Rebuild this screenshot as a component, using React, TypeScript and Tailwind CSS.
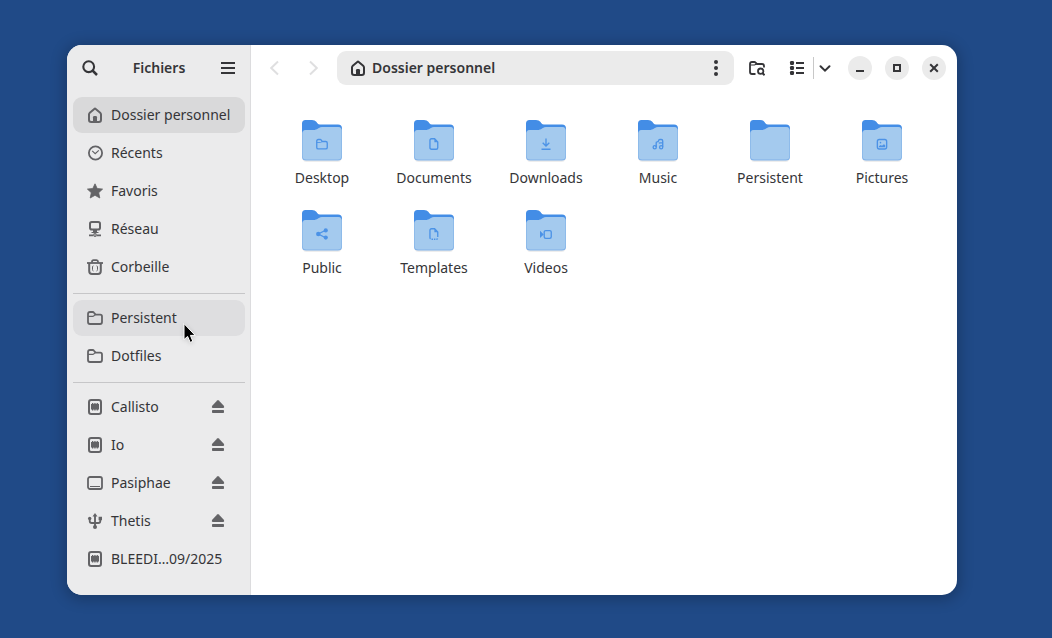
import * as React from "react";
import clsx from "clsx";

function Icon(props: { className?: string; children: React.ReactNode }) {
  return (
    <svg
      viewBox="0 0 16 16"
      fill="none"
      stroke="currentColor"
      strokeWidth="2"
      aria-hidden="true"
      className={clsx("size-4 shrink-0", props.className)}
    >
      {props.children}
    </svg>
  );
}

function SearchIcon() {
  return (
    <Icon>
      <circle cx="6.7" cy="6.7" r="5.4" strokeWidth="2.1" />
      <path d="M10.5 10.5L15 15" strokeWidth="2.5" />
    </Icon>
  );
}

function MenuIcon() {
  return (
    <Icon>
      <path d="M1 3H15M1 8H15M1 13H15" />
    </Icon>
  );
}

function HomeIcon() {
  return (
    <Icon>
      <path
        d="M2 7.5V12.8Q2 15 4.2 15H11.8Q14 15 14 12.8V7.5Q14 6.4 13.2 5.7L8.7 1.9Q8 1.3 7.3 1.9L2.8 5.7Q2 6.4 2 7.5Z"
        strokeLinejoin="round"
      />
      <path d="M6 15V10.3Q6 9 7.3 9H8.7Q10 9 10 10.3V15Z" fill="currentColor" stroke="none" />
    </Icon>
  );
}

function ClockIcon() {
  return (
    <Icon>
      <circle cx="8.5" cy="8" r="6.6" strokeWidth="1.8" />
      <path d="M5.2 5.9L8.2 8.7L11.8 5.4" strokeWidth="1.2" />
    </Icon>
  );
}

function StarIcon() {
  return (
    <Icon>
      <path
        d="M8 0.8L10.2 5.5L15.6 6.1L11.7 9.7L12.8 15L8 12.3L3.2 15L4.3 9.7L0.4 6.1L5.8 5.5Z"
        fill="currentColor"
        stroke="currentColor"
        strokeWidth="0.8"
        strokeLinejoin="round"
      />
    </Icon>
  );
}

function NetworkIcon() {
  return (
    <Icon>
      <rect x="3" y="1" width="10" height="7.5" rx="1.8" />
      <path d="M6 9H10V11H11.5V12H4.5V11H6Z" fill="currentColor" stroke="none" />
      <path d="M2 14.4H6M10 14.4H14" strokeWidth="1.6" />
      <circle cx="8" cy="14" r="1.3" strokeWidth="1.2" />
    </Icon>
  );
}

function TrashIcon() {
  return (
    <Icon>
      <path d="M0 4H16" strokeWidth="1.8" />
      <path d="M5 3.5V2.8Q5 1.2 6.5 1.2H9.5Q11 1.2 11 2.8V3.5" strokeWidth="1.8" />
      <path d="M2.2 4V12Q2.2 15 5 15H11Q13.8 15 13.8 12V4" />
      <path
        d="M6.4 6.8Q5.5 7 5.5 8V10.5Q5.5 11.7 6.4 12M9.6 6.8Q10.5 7 10.5 8V10.5Q10.5 11.7 9.6 12"
        strokeWidth="1"
      />
    </Icon>
  );
}

function FolderIcon() {
  return (
    <Icon>
      <path
        d="M1 5.5V12Q1 14 3 14H13Q15 14 15 12V6.5Q15 4.7 13.2 4.7H8.6L7 2.8Q6.5 2 5.6 2H3Q1 2 1 4Z"
        strokeWidth="1.8"
      />
      <path d="M1 6.3H5.8Q6.4 6.3 6.9 5.8L8.2 4.6" strokeWidth="1.2" />
    </Icon>
  );
}

function MediaIcon() {
  return (
    <Icon>
      <rect x="2" y="1" width="12" height="14" rx="2.2" />
      <path
        d="M4 5H5V4H6V5H6.7V4H7.7V5H8.4V4H9.4V5H10.1V4H11.1V5H12V10.5H11.1V11.5H10.1V10.5H9.4V11.5H8.4V10.5H7.7V11.5H6.7V10.5H6V11.5H5V10.5H4Z"
        fill="currentColor"
        stroke="none"
      />
    </Icon>
  );
}

function DiskIcon() {
  return (
    <Icon>
      <rect x="1" y="2" width="14" height="12" rx="2" strokeWidth="1.8" />
      <path d="M3 11.5H13" strokeWidth="1" />
    </Icon>
  );
}

function UsbIcon() {
  return (
    <Icon>
      <path d="M8 2V14" strokeWidth="1.9" />
      <path d="M2.7 5V8Q2.7 10 4.7 10H11.3Q13.3 10 13.3 8V5" strokeWidth="1.8" />
      <path d="M5.5 3.4L8 0L10.5 3.4Z" fill="currentColor" stroke="none" />
      <circle cx="2.7" cy="5.4" r="1.7" fill="currentColor" stroke="none" />
      <path d="M11.6 3.8H15V7.2H11.6Z" fill="currentColor" stroke="none" />
      <circle cx="8" cy="14" r="2" fill="currentColor" stroke="none" />
    </Icon>
  );
}

function EjectIcon() {
  return (
    <Icon>
      <path
        d="M7.2 1.4Q8 0.7 8.8 1.4L13.8 6.8Q14.8 9 13 9H3Q1.2 9 2.2 6.8Z"
        fill="currentColor"
        stroke="none"
      />
      <rect x="2" y="11" width="12" height="3" rx="0.8" fill="currentColor" stroke="none" />
    </Icon>
  );
}

function FolderSearchIcon() {
  return (
    <Icon>
      <path
        d="M6.5 14H3Q1 14 1 12V4Q1 2 3 2H5.3Q6.1 2 6.6 2.7L7.9 4H13Q15 4 15 6V7.5"
        strokeWidth="1.8"
      />
      <path d="M1.5 5H5.5L7.5 4" strokeWidth="1.2" />
      <circle cx="11.7" cy="11.2" r="2.7" strokeWidth="1.8" />
      <path d="M13.4 13L15.6 15.2" />
    </Icon>
  );
}

function ListIcon() {
  return (
    <Icon>
      <rect x="1" y="1" width="4" height="4" rx="1.2" fill="currentColor" stroke="none" />
      <rect x="1" y="6" width="4" height="4" rx="1.2" fill="currentColor" stroke="none" />
      <rect x="1" y="11" width="4" height="4" rx="1.2" fill="currentColor" stroke="none" />
      <path d="M7 3H15M7 8H15M7 13H15" />
    </Icon>
  );
}

type Place = {
  name: string;
  icon: React.ComponentType;
  state?: "active" | "hover";
  ejectable?: boolean;
};

const places: Place[] = [
  { name: "Dossier personnel", icon: HomeIcon, state: "active" },
  { name: "Récents", icon: ClockIcon },
  { name: "Favoris", icon: StarIcon },
  { name: "Réseau", icon: NetworkIcon },
  { name: "Corbeille", icon: TrashIcon },
];

const bookmarks: Place[] = [
  { name: "Persistent", icon: FolderIcon, state: "hover" },
  { name: "Dotfiles", icon: FolderIcon },
];

const volumes: Place[] = [
  { name: "Callisto", icon: MediaIcon, ejectable: true },
  { name: "Io", icon: MediaIcon, ejectable: true },
  { name: "Pasiphae", icon: DiskIcon, ejectable: true },
  { name: "Thetis", icon: UsbIcon, ejectable: true },
  { name: "BLEEDI…09/2025", icon: MediaIcon },
];

function PlaceList(props: { items: Place[] }) {
  return (
    <ul className="flex flex-col gap-0.5">
      {props.items.map((item) => (
        <li
          key={item.name}
          className={clsx(
            "relative flex h-9 items-center rounded-[9px]",
            item.state === "active" && "bg-[#d9d9da]",
            item.state === "hover" && "bg-[#dedee0]"
          )}
        >
          <a
            href="#"
            className="flex h-full min-w-0 flex-1 items-center gap-2 pl-3.5 whitespace-nowrap"
          >
            <span className="text-[#636366]">
              <item.icon />
            </span>
            {item.name}
          </a>
          {item.ejectable && (
            <button
              type="button"
              aria-label={`Éjecter ${item.name}`}
              className="mr-2.5 grid size-[34px] place-items-center text-[#636366]"
            >
              <EjectIcon />
            </button>
          )}
          {item.state === "hover" && <Pointer />}
        </li>
      ))}
    </ul>
  );
}

function Pointer() {
  return (
    <svg
      viewBox="0 0 14 22"
      className="pointer-events-none absolute top-[23px] left-[110px] h-[22px] w-3.5 drop-shadow-sm"
      aria-hidden="true"
    >
      <path
        d="M1 0.6V16.6L4.6 13.4L7.2 19.4L9.8 18.3L7.4 12.4H12.2Z"
        fill="#000"
        stroke="#fff"
        strokeWidth="1"
      />
    </svg>
  );
}

const emblems: Record<string, React.ReactNode> = {
  Desktop: (
    <>
      <path d="M1 5V12.5Q1 14.5 3 14.5H13Q15 14.5 15 12.5V6.5Q15 4.7 13 4.7H8.4L7 2.7Q6.5 2 5.6 2H3Q1 2 1 4Z" />
      <path d="M1 6H6L8.4 4.7" strokeWidth="1.2" />
    </>
  ),
  Documents: (
    <>
      <path d="M4.6 1H8.8L13 5.4V13Q13 15 11 15H4.6Q2.6 15 2.6 13V3Q2.6 1 4.6 1Z" />
      <path d="M8.5 1V5.8H13Z" fill="currentColor" stroke="none" />
    </>
  ),
  Downloads: <path d="M8 0.5V10.5M3.6 6.4L8 10.8L12.4 6.4M2 15H14" />,
  Music: (
    <>
      <path d="M5.6 12V6.2Q5.6 5.2 6.8 5.2Q8.6 5 8.8 3.6Q9 2 10.4 2H12.3Q14.3 2 14.3 4V12M9 6.8Q10 6.4 11.5 6.4H14.3" />
      <circle cx="3.6" cy="12.3" r="2.1" />
      <circle cx="12.2" cy="12.3" r="2.1" />
    </>
  ),
  Pictures: (
    <>
      <rect x="1.8" y="2" width="12.4" height="12.6" rx="2.5" />
      <path
        d="M3.8 12.4V11L6.2 9.4L8 10.4L10.6 8.2L12.3 9.8V12.4Z"
        fill="currentColor"
        stroke="none"
      />
      <circle cx="6" cy="6.2" r="1.1" fill="currentColor" stroke="none" />
    </>
  ),
  Public: (
    <>
      <path d="M12.8 3L3 8L12.8 13" />
      <circle cx="13" cy="3.2" r="2.8" fill="currentColor" stroke="none" />
      <circle cx="3" cy="8" r="2.9" fill="currentColor" stroke="none" />
      <circle cx="13" cy="12.8" r="2.8" fill="currentColor" stroke="none" />
    </>
  ),
  Templates: (
    <>
      <path d="M13 12V5.4L8.8 1H4.6Q2.6 1 2.6 3V13" />
      <path d="M2.6 12.6Q2.6 15 4.6 15H11Q13 15 13 12.6" strokeDasharray="2 1.2" />
      <path d="M8.5 1V5.8H13Z" fill="currentColor" stroke="none" />
    </>
  ),
  Videos: (
    <>
      <rect x="5.6" y="3.4" width="9.4" height="10.4" rx="2" />
      <path d="M0 3.8L5 8.6L0 13.4Z" fill="currentColor" stroke="none" />
    </>
  ),
};

const folders = [
  "Desktop",
  "Documents",
  "Downloads",
  "Music",
  "Persistent",
  "Pictures",
  "Public",
  "Templates",
  "Videos",
];

function Folder(props: { name: string }) {
  return (
    <a href="#" className="flex flex-col items-center gap-1">
      <svg
        viewBox="0 0 48 48"
        className="size-12 text-[#438de6]"
        fill="none"
        aria-hidden="true"
      >
        <rect x="4.5" y="15" width="39" height="31" rx="4" fill="#000" opacity="0.07" />
        <path
          d="M4 7.5Q4 4 7.5 4H14Q17 4 18.3 5.8L19.4 7.2Q20.4 8.4 22 8.4H40Q44 8.4 44 12.4V38H4Z"
          fill="#438de6"
        />
        <path
          d="M4 17.5Q4 14 7.5 14H16.5Q18.8 14 20.2 12.6Q22 11 24 11H40.5Q44 11 44 14.5V41Q44 44.6 40 44.6H8Q4 44.6 4 41Z"
          fill="#80b1e8"
        />
        <path
          d="M4.6 17.5Q4.6 14 8 14H16.5Q18.8 14 20.2 12.6Q22 11 24 11H40Q43.4 11 43.4 14.5V40Q43.4 43.6 39.6 43.6H8.4Q4.6 43.6 4.6 40Z"
          fill="#a4caee"
        />
        <g transform="translate(18 22) scale(0.75)" stroke="currentColor" strokeWidth="1.8" opacity="0.9">
          {emblems[props.name]}
        </g>
      </svg>
      <span className="leading-5">{props.name}</span>
    </a>
  );
}

function WindowButton(props: { label: string; children: React.ReactNode }) {
  return (
    <button
      type="button"
      aria-label={props.label}
      className="grid size-6 place-items-center rounded-full bg-[#ebebeb]"
    >
      <Icon>{props.children}</Icon>
    </button>
  );
}

function ToolButton(props: {
  label: string;
  disabled?: boolean;
  children: React.ReactNode;
}) {
  return (
    <button
      type="button"
      aria-label={props.label}
      disabled={props.disabled}
      className="grid size-[34px] shrink-0 place-items-center disabled:text-[#dfdfe0]"
    >
      {props.children}
    </button>
  );
}

export default function App() {
  return (
    <div className="flex min-h-screen bg-[#204a87] pt-[45px] pr-[95px] pb-[43px] pl-[67px] font-['Noto_Sans',sans-serif] text-sm text-[#353538]">
      <div className="flex min-w-0 flex-1 overflow-hidden rounded-[15px] bg-white shadow-[0_2px_14px_3px_rgba(0,0,0,0.22)]">
        <aside className="w-[184px] shrink-0 border-r border-[#dcdcde] bg-[#ebebec] pr-[5px] pb-[18px] pl-1.5">
          <header className="flex items-center justify-between py-1.5">
            <ToolButton label="Rechercher">
              <SearchIcon />
            </ToolButton>
            <h1 className="font-semibold">Fichiers</h1>
            <ToolButton label="Menu principal">
              <MenuIcon />
            </ToolButton>
          </header>
          <nav className="pt-1.5">
            <PlaceList items={places} />
            <hr className="mt-2 mb-1.5 border-[#c6c6c8]" />
            <PlaceList items={bookmarks} />
            <hr className="mt-2 mb-1.5 border-[#c6c6c8]" />
            <PlaceList items={volumes} />
          </nav>
        </aside>

        <main className="min-w-0 flex-1">
          <header className="flex items-center py-1.5 pr-[11px] pl-1.5">
            <div className="mr-1.5 flex gap-1.5">
              <ToolButton label="Précédent" disabled>
                <Icon>
                  <path d="M12 1.5L5.2 8L12 14.5" />
                </Icon>
              </ToolButton>
              <ToolButton label="Suivant" disabled>
                <Icon>
                  <path d="M4 1.5L10.8 8L4 14.5" />
                </Icon>
              </ToolButton>
            </div>
            <div className="flex h-[34px] min-w-0 flex-1 items-center rounded-[9px] bg-[#ebebeb] pr-px pl-[13px]">
              <a href="#" className="flex flex-1 items-center gap-1.5 font-semibold">
                <HomeIcon />
                Dossier personnel
              </a>
              <ToolButton label="Menu du dossier">
                <Icon>
                  <g fill="currentColor" stroke="none">
                    <circle cx="8" cy="2" r="2" />
                    <circle cx="8" cy="8" r="2" />
                    <circle cx="8" cy="14" r="2" />
                  </g>
                </Icon>
              </ToolButton>
            </div>
            <div className="ml-1.5 flex items-center gap-1.5">
              <ToolButton label="Rechercher partout">
                <FolderSearchIcon />
              </ToolButton>
              <div className="flex items-center">
                <ToolButton label="Vue en liste">
                  <ListIcon />
                </ToolButton>
                <button
                  type="button"
                  aria-label="Options d’affichage"
                  className="-ml-px grid h-[22px] w-6 place-items-center border-l border-[#c8c8c8] pr-px"
                >
                  <Icon>
                    <path d="M3.5 6.2L8 10.7L12.5 6.2" strokeLinecap="round" />
                  </Icon>
                </button>
              </div>
            </div>
            <div className="ml-[11px] flex gap-[13px]">
              <WindowButton label="Réduire">
                <path d="M4 11H12" />
              </WindowButton>
              <WindowButton label="Agrandir">
                <rect x="5" y="5" width="6" height="6" />
              </WindowButton>
              <WindowButton label="Fermer">
                <path d="M4.2 4.2L11.8 11.8M11.8 4.2L4.2 11.8" />
              </WindowButton>
            </div>
          </header>

          <div className="grid grid-cols-[repeat(auto-fill,112px)] gap-y-[18px] pt-[25px] pb-6 pl-[15px]">
            {folders.map((name) => (
              <Folder key={name} name={name} />
            ))}
          </div>
        </main>
      </div>
    </div>
  );
}
